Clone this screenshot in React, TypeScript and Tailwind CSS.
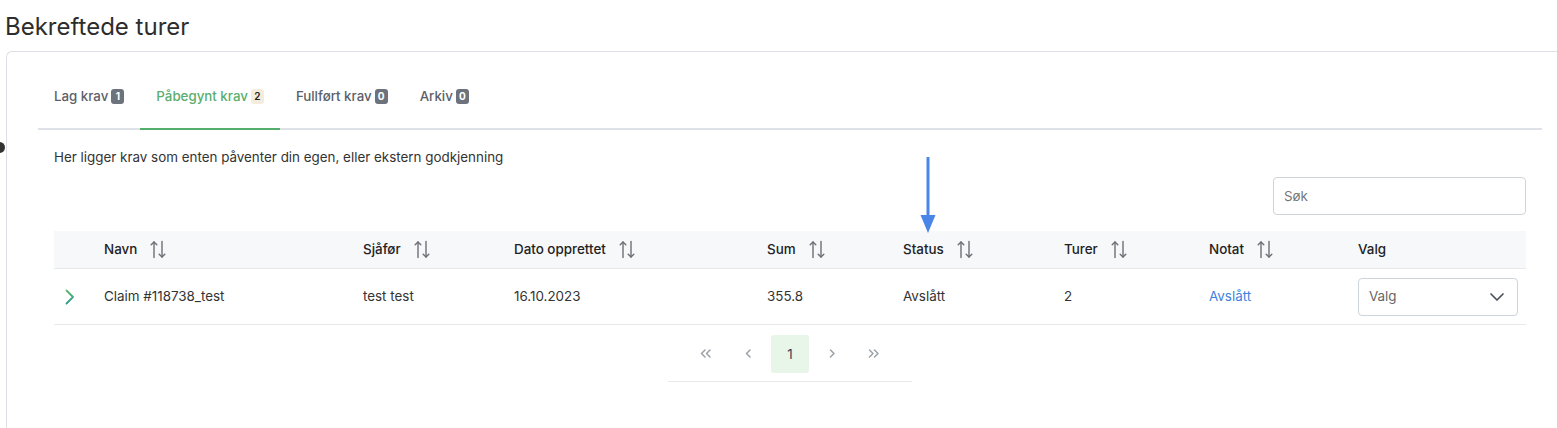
import React from 'react';

const tabs = [
  { label: 'Lag krav', count: 1 },
  { label: 'Påbegynt krav', count: 2, active: true },
  { label: 'Fullført krav', count: 0 },
  { label: 'Arkiv', count: 0 },
];

const columns = [
  { key: 'navn', label: 'Navn', sortable: true },
  { key: 'sjafor', label: 'Sjåfør', sortable: true },
  { key: 'dato', label: 'Dato opprettet', sortable: true },
  { key: 'sum', label: 'Sum', sortable: true },
  { key: 'status', label: 'Status', sortable: true },
  { key: 'turer', label: 'Turer', sortable: true },
  { key: 'notat', label: 'Notat', sortable: true },
  { key: 'valg', label: 'Valg', sortable: false },
];

const rows = [
  {
    navn: 'Claim #118738_test',
    sjafor: 'test test',
    dato: '16.10.2023',
    sum: '355.8',
    status: 'Avslått',
    turer: '2',
    notat: 'Avslått',
  },
];

const gridCols = 'grid grid-cols-[50px_259px_151px_253px_136px_161px_145px_149px_168px]';

function SortIcon() {
  return (
    <svg width="16" height="19" viewBox="0 0 16 19" fill="none" stroke="#6b6f75" strokeWidth="1.4" strokeLinecap="round" strokeLinejoin="round">
      <path d="M4 17.5V2" />
      <path d="M1.2 4.8L4 2l2.8 2.8" />
      <path d="M12 1.5V17" />
      <path d="M9.2 14.2L12 17l2.8-2.8" />
    </svg>
  );
}

function ChevronRight() {
  return (
    <svg width="12" height="16" viewBox="0 0 12 16" fill="none">
      <defs>
        <linearGradient id="chev" x1="0" y1="0" x2="0" y2="1">
          <stop offset="0" stopColor="#5bb56a" />
          <stop offset="1" stopColor="#2f9c8c" />
        </linearGradient>
      </defs>
      <path d="M2.5 1.5L9 8l-6.5 6.5" stroke="url(#chev)" strokeWidth="1.8" strokeLinecap="round" strokeLinejoin="round" />
    </svg>
  );
}

function ChevronDown() {
  return (
    <svg width="16" height="10" viewBox="0 0 16 10" fill="none" stroke="#4b5058" strokeWidth="1.7" strokeLinecap="round" strokeLinejoin="round">
      <path d="M2 2l6 6 6-6" />
    </svg>
  );
}

// pagination glyphs: small thin chevrons, single or double
function PageArrow({ dir, double }: { dir: 'left' | 'right'; double?: boolean }) {
  const one = dir === 'left' ? 'M5 1L1.5 4.5 5 8' : 'M1.5 1L5 4.5 1.5 8';
  const two = dir === 'left' ? 'M10 1L6.5 4.5 10 8' : 'M6.5 1L10 4.5 6.5 8';
  return (
    <svg width={double ? 12 : 7} height="10" viewBox={double ? '0 0 12 10' : '0 0 7 10'} fill="none" stroke="#9ca1a8" strokeWidth="1.5" strokeLinecap="round" strokeLinejoin="round">
      <path d={one} />
      {double && <path d={two} />}
    </svg>
  );
}

export default function App() {
  return (
    <div className="relative h-[428px] overflow-hidden bg-white font-['Inter','Liberation_Sans',sans-serif] text-[#333]">
      <h1 className="flex h-[51px] items-center pl-[5px] pt-[2px] text-[24px] font-normal text-[#2d2d2d]">
        Bekreftede turer
      </h1>

      <div className="ml-[6px] h-[400px] rounded-tl-[6px] border-l border-t border-[#dcdfe3] pl-[31px] pr-[15px] pt-[12px]">
        {/* tabs */}
        <div className="flex border-b-2 border-[#dee2e6]">
          {tabs.map(t => (
            <div
              key={t.label}
              className={
                t.active
                  ? '-mb-[2px] flex items-center gap-[3px] border-b-2 border-[#55ae6c] px-4 py-[22px] text-[13.3px] font-medium leading-[20px] text-[#5aae6e]'
                  : '-mb-[2px] flex items-center gap-[3px] border-b-2 border-transparent px-4 py-[22px] text-[13.3px] font-medium leading-[20px] text-[#5b6069]'
              }
            >
              <span>{t.label}</span>
              <span
                className={
                  t.active
                    ? 'flex h-[15px] min-w-[13px] items-center justify-center rounded-[3px] bg-[#f4ecdc] px-[3px] text-[10px] font-semibold text-[#222]'
                    : 'flex h-[15px] min-w-[13px] items-center justify-center rounded-[3px] bg-[#6c737d] px-[3px] text-[10px] font-bold text-white'
                }
              >
                {t.count}
              </span>
            </div>
          ))}
        </div>

        <div className="px-4">
          <p className="mt-[17px] text-[13.4px] leading-[20px] text-[#333]">
            Her ligger krav som enten påventer din egen, eller ekstern godkjenning
          </p>

          <div className="mt-[10px] flex justify-end">
            <div className="flex h-[38px] w-[253px] items-center rounded-[4px] border border-[#ced4da] px-[10px] text-[13.4px] text-[#777]">
              Søk
            </div>
          </div>

          {/* table */}
          <div className="mt-[16px]">
            <div className={`${gridCols} h-[38px] items-center border-b border-[#e6e8eb] bg-[#f7f8fa] text-[13.4px] font-medium text-[#222]`}>
              <div />
              {columns.map(c => (
                <div key={c.key} className="flex items-center gap-[13px]">
                  <span>{c.label}</span>
                  {c.sortable && <SortIcon />}
                </div>
              ))}
            </div>
            {rows.map(r => (
              <div key={r.navn} className={`${gridCols} h-[56px] items-center border-b border-[#e6e8eb] text-[13.4px] text-[#333]`}>
                <div className="flex pl-[10px]">
                  <ChevronRight />
                </div>
                <div>{r.navn}</div>
                <div>{r.sjafor}</div>
                <div>{r.dato}</div>
                <div>{r.sum}</div>
                <div>{r.status}</div>
                <div>{r.turer}</div>
                <div className="text-[#3f7fe0]">{r.notat}</div>
                <div>
                  <div className="flex h-[38px] w-[160px] items-center justify-between rounded-[4px] border border-[#ced4da] pl-[10px] pr-[12px] text-[13.4px] text-[#666]">
                    <span>Valg</span>
                    <ChevronDown />
                  </div>
                </div>
              </div>
            ))}
          </div>

          {/* pagination */}
          <div className="flex justify-center">
            <div className="mt-[10px] flex w-[244px] justify-center gap-[4px] border-b border-[#e6e8eb] pb-[8px]">
              <div className="flex h-[38px] w-[38px] items-center justify-center"><PageArrow dir="left" double /></div>
              <div className="flex h-[38px] w-[38px] items-center justify-center"><PageArrow dir="left" /></div>
              <div className="flex h-[38px] w-[38px] items-center justify-center rounded-[3px] bg-[#e8f5e9] text-[13.4px] text-[#3c3c5a]">
                1
              </div>
              <div className="flex h-[38px] w-[38px] items-center justify-center"><PageArrow dir="right" /></div>
              <div className="flex h-[38px] w-[38px] items-center justify-center"><PageArrow dir="right" double /></div>
            </div>
          </div>
        </div>
      </div>

      {/* annotation arrow */}
      <svg className="absolute left-[919px] top-[157px]" width="18" height="78" viewBox="0 0 18 78">
        <path d="M9 1v58" stroke="#4a86e8" strokeWidth="3" strokeLinecap="round" />
        <path d="M1.5 58h15L9 76z" fill="#4a86e8" />
      </svg>

      {/* stray dot at the edge */}
      <div className="absolute -left-[6px] top-[142px] h-[11px] w-[11px] rounded-full bg-[#333]" />
    </div>
  );
}
